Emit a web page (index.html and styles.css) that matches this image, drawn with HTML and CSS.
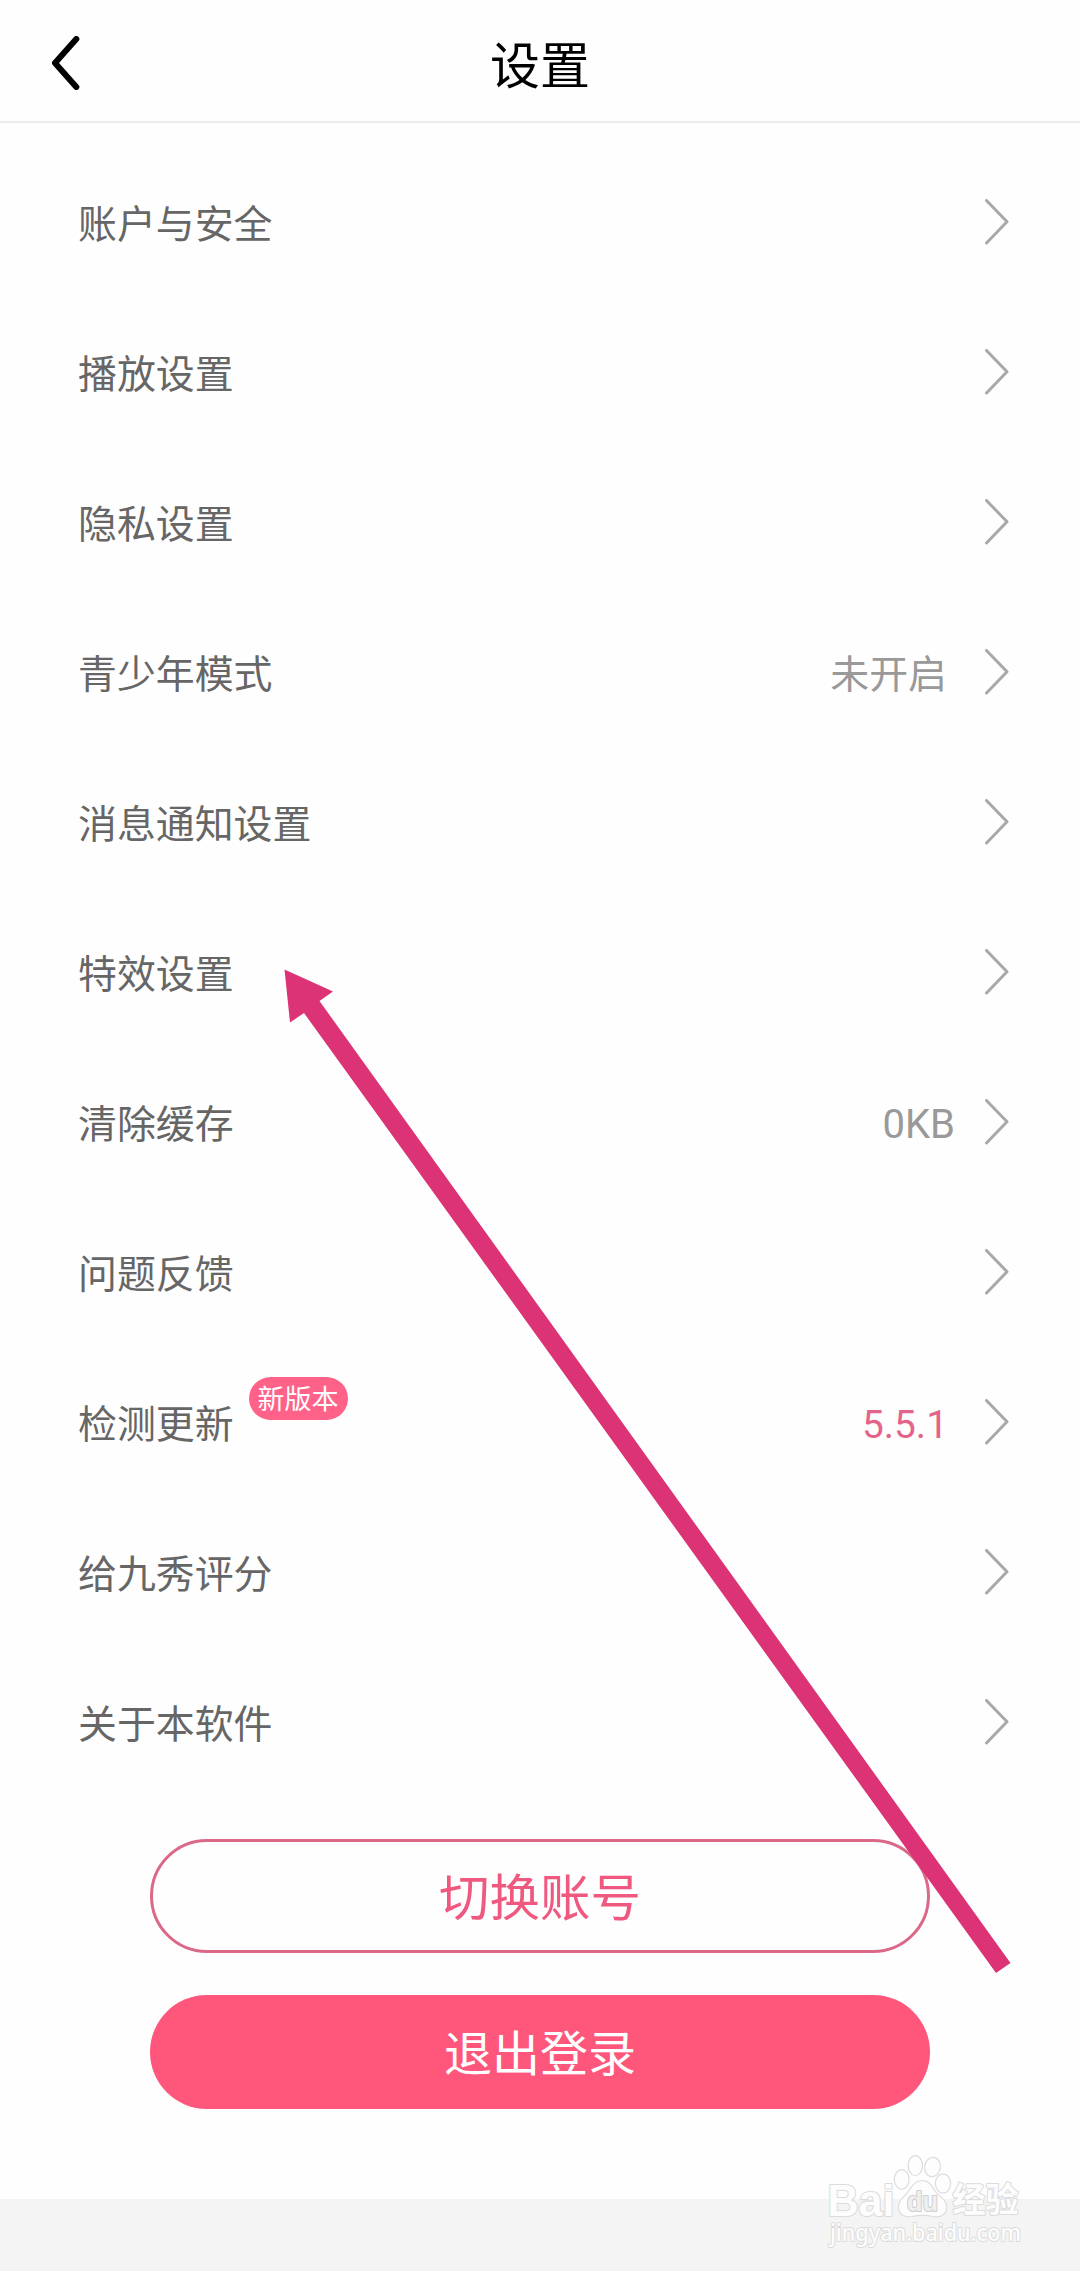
FILE: index.html
```html
<!DOCTYPE html>
<html lang="zh-CN">
<head>
<meta charset="utf-8">
<title>设置</title>
<link rel="stylesheet" href="styles.css">
</head>
<body>
<svg class="defs" width="0" height="0"><symbol id="chevron" viewBox="0 0 24 46"><path d="M1.5 1.5 L22 22.7 L1.5 44"/></symbol></svg>
<main class="screen">
  <header class="topbar">
    <svg class="back" viewBox="0 0 28 54"><path d="M24.3 3 L3 27 L24.3 51"/></svg>
    <h1 class="title">设置</h1>
  </header>
  <ul class="list">
    <li class="row"><span class="label">账户与安全</span><svg class="chevron"><use href="#chevron"/></svg></li>
    <li class="row"><span class="label">播放设置</span><svg class="chevron"><use href="#chevron"/></svg></li>
    <li class="row"><span class="label">隐私设置</span><svg class="chevron"><use href="#chevron"/></svg></li>
    <li class="row"><span class="label">青少年模式</span><span class="value">未开启</span><svg class="chevron"><use href="#chevron"/></svg></li>
    <li class="row"><span class="label">消息通知设置</span><svg class="chevron"><use href="#chevron"/></svg></li>
    <li class="row"><span class="label">特效设置</span><svg class="chevron"><use href="#chevron"/></svg></li>
    <li class="row"><span class="label">清除缓存</span><span class="value cache">0KB</span><svg class="chevron"><use href="#chevron"/></svg></li>
    <li class="row"><span class="label">问题反馈</span><svg class="chevron"><use href="#chevron"/></svg></li>
    <li class="row"><span class="label">检测更新</span><span class="badge">新版本</span><span class="value version">5.5.1</span><svg class="chevron"><use href="#chevron"/></svg></li>
    <li class="row"><span class="label">给九秀评分</span><svg class="chevron"><use href="#chevron"/></svg></li>
    <li class="row"><span class="label">关于本软件</span><svg class="chevron"><use href="#chevron"/></svg></li>
  </ul>
  <div class="actions">
    <button class="button outline">切换账号</button>
    <button class="button solid">退出登录</button>
  </div>
  <footer class="footer"></footer>
  <svg class="arrow" viewBox="0 0 730 1010"><path d="M0.500 0.500 L49 22.500 L35.500 32 L726.500 994 L712 1004 L20 44 L6 53.500 Z"/></svg>
  <svg class="watermark" viewBox="0 0 210 121">
    <g class="mark">
      <text class="brand" x="7.500" y="65.500" textLength="67" lengthAdjust="spacingAndGlyphs">Bai</text>
      <ellipse cx="81.700" cy="29.500" rx="7.400" ry="9.800"/>
      <ellipse cx="95.300" cy="15.700" rx="7.200" ry="10"/>
      <ellipse cx="112.500" cy="17" rx="7.800" ry="9.800" transform="rotate(10 112.500 17)"/>
      <ellipse cx="123" cy="33.500" rx="7.600" ry="9.600"/>
      <path d="M102 30.500 C109 30.500 112 36 115 41 C119 47 126 48 126.500 57 C127 65 120 68 113 66.500 C106 65 99 65 92 66.500 C84 68 78 64 78.500 56 C79 48 86 46 90 39 C93 34 96 30.500 102 30.500 Z"/>
      <text class="du" x="87" y="60.500" textLength="31" lengthAdjust="spacingAndGlyphs">du</text>
      <text class="jingyan" x="132.500" y="62" textLength="66" lengthAdjust="spacingAndGlyphs">经验</text>
      <text class="url" x="10" y="91" textLength="191" lengthAdjust="spacingAndGlyphs">jingyan.baidu.com</text>
    </g>
  </svg>
</main>
</body>
</html>
```
FILE: styles.css
```css
* { box-sizing: border-box; }

body {
  margin: 0;
  background: #fefefe;
  font-family: Roboto, "Noto Sans CJK SC", sans-serif;
}

.defs { display: block; }

.screen {
  position: relative;
  display: flex;
  flex-direction: column;
  width: 1080px;
  height: 2271px;
  overflow: hidden;
}

.topbar {
  display: grid;
  grid-template-columns: 1fr auto 1fr;
  align-items: center;
  height: 123px;
  padding: 4px 52px 0;
  border-bottom: 2px solid #ededed;
}

.back {
  width: 28px;
  height: 54px;
  fill: none;
  stroke: #000;
  stroke-width: 6;
  stroke-linecap: round;
  stroke-linejoin: round;
}

.title {
  margin: 9px 0 0;
  font-size: 50px;
  font-weight: 400;
  line-height: 60px;
  color: #000;
}

.list {
  margin: 24px 0 0;
  padding: 0 71px 0 78px;
  list-style: none;
}

.row {
  display: flex;
  align-items: center;
  height: 150px;
  font-size: 38.9px;
  line-height: 58px;
  color: #666;
}

.label { padding-top: 5px; }

.value {
  margin-left: auto;
  padding-top: 5px;
  color: #999;
}

.cache {
  margin-right: -10px;
  font-size: 40px;
}

.version {
  margin-right: -3px;
  color: #e4638a;
}

.chevron {
  width: 24px;
  height: 46px;
  margin-left: auto;
  fill: none;
  stroke: #a8a8a8;
  stroke-width: 3;
  stroke-linecap: round;
  stroke-linejoin: round;
}

.value + .chevron { margin-left: 38px; }

.cache + .chevron { margin-left: 40px; }

.version + .chevron { margin-left: 40px; }

.badge {
  align-self: flex-start;
  width: 99px;
  height: 43px;
  margin: 30px 0 0 15px;
  border-radius: 22px;
  background: #ff6289;
  color: #fff;
  font-size: 27px;
  line-height: 47px;
  text-align: center;
}

.actions {
  display: flex;
  flex-direction: column;
  align-items: center;
  gap: 42px;
  margin-top: 42px;
}

.button {
  width: 780px;
  height: 114px;
  padding: 6px 0 0;
  border: 0;
  border-radius: 57px;
  font-family: inherit;
  line-height: 60px;
}

.outline {
  border: 3px solid #dc6888;
  background: transparent;
  color: #f0597f;
  font-size: 50.5px;
}

.solid {
  background: #ff577b;
  color: #fff;
  font-size: 48px;
}

.footer {
  height: 72px;
  margin-top: auto;
  background: #f4f4f4;
}

.arrow {
  position: absolute;
  left: 284px;
  top: 969px;
  width: 730px;
  height: 1010px;
  fill: #db3375;
}

.watermark {
  position: absolute;
  left: 820px;
  top: 2150px;
  width: 210px;
  height: 121px;
  overflow: visible;
}

.mark {
  fill: #fdfdfd;
  stroke: #dcdcdc;
  stroke-width: 1.2;
  stroke-linejoin: round;
}

.mark text { paint-order: stroke; stroke-width: 2.2; }

.brand { font: 700 44px "Liberation Sans", sans-serif; }

.mark .du {
  font: 700 27px "Liberation Sans", sans-serif;
  fill: #efefef;
  stroke: #cfcfcf;
}

.jingyan { font: 700 34px "Noto Sans CJK SC", sans-serif; }

.url { font: 500 24px "Noto Sans", sans-serif; }
```
